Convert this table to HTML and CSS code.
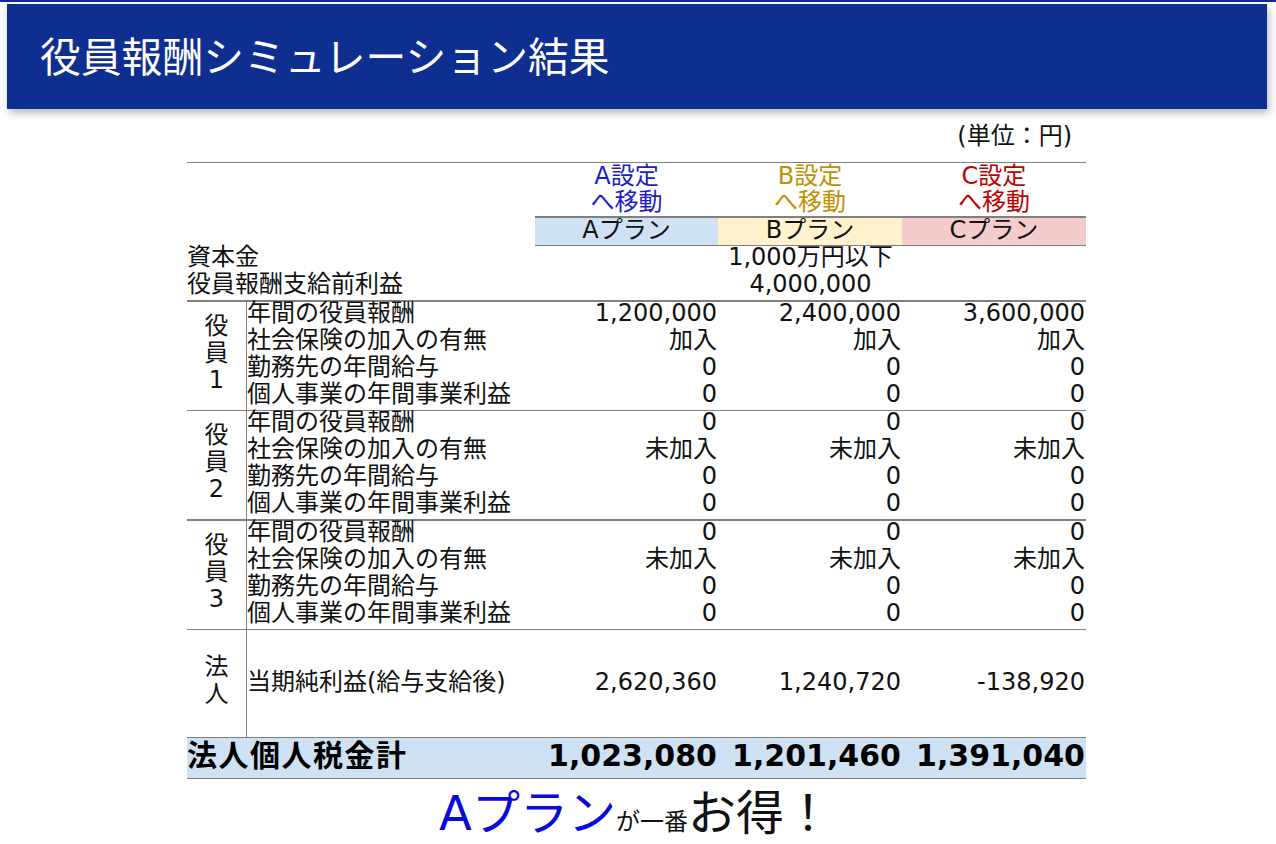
FILE: index.html
```html
<!DOCTYPE html>
<html lang="ja">
<head>
<meta charset="utf-8">
<title>役員報酬シミュレーション結果</title>
<link rel="stylesheet" href="styles.css">
</head>
<body>
<div class="topline"></div>
<header class="banner"><h1>役員報酬シミュレーション結果</h1></header>
<main class="sheet">
  <div class="unit">(単位：円)</div>

  <div class="cols links">
    <div></div>
    <div class="link la">A設定<br>へ移動</div>
    <div class="link lb">B設定<br>へ移動</div>
    <div class="link lc">C設定<br>へ移動</div>
  </div>

  <div class="cols plans">
    <div></div>
    <div class="plan pa">Aプラン</div>
    <div class="plan pb">Bプラン</div>
    <div class="plan pc">Cプラン</div>
  </div>

  <div class="info">
    <div class="irow"><span>資本金</span><span class="mid">1,000万円以下</span></div>
    <div class="irow"><span>役員報酬支給前利益</span><span class="mid">4,000,000</span></div>
  </div>

  <section class="group thick">
    <div class="role">役<br>員<br>1</div>
    <div class="rows">
      <div class="drow"><span>年間の役員報酬</span><span class="num">1,200,000</span><span class="num">2,400,000</span><span class="num">3,600,000</span></div>
      <div class="drow"><span>社会保険の加入の有無</span><span class="num">加入</span><span class="num">加入</span><span class="num">加入</span></div>
      <div class="drow"><span>勤務先の年間給与</span><span class="num">0</span><span class="num">0</span><span class="num">0</span></div>
      <div class="drow"><span>個人事業の年間事業利益</span><span class="num">0</span><span class="num">0</span><span class="num">0</span></div>
    </div>
  </section>

  <section class="group">
    <div class="role">役<br>員<br>2</div>
    <div class="rows">
      <div class="drow"><span>年間の役員報酬</span><span class="num">0</span><span class="num">0</span><span class="num">0</span></div>
      <div class="drow"><span>社会保険の加入の有無</span><span class="num">未加入</span><span class="num">未加入</span><span class="num">未加入</span></div>
      <div class="drow"><span>勤務先の年間給与</span><span class="num">0</span><span class="num">0</span><span class="num">0</span></div>
      <div class="drow"><span>個人事業の年間事業利益</span><span class="num">0</span><span class="num">0</span><span class="num">0</span></div>
    </div>
  </section>

  <section class="group thick">
    <div class="role">役<br>員<br>3</div>
    <div class="rows">
      <div class="drow"><span>年間の役員報酬</span><span class="num">0</span><span class="num">0</span><span class="num">0</span></div>
      <div class="drow"><span>社会保険の加入の有無</span><span class="num">未加入</span><span class="num">未加入</span><span class="num">未加入</span></div>
      <div class="drow"><span>勤務先の年間給与</span><span class="num">0</span><span class="num">0</span><span class="num">0</span></div>
      <div class="drow"><span>個人事業の年間事業利益</span><span class="num">0</span><span class="num">0</span><span class="num">0</span></div>
    </div>
  </section>

  <section class="group corp">
    <div class="role">法<br>人</div>
    <div class="rows">
      <div class="drow crow"><span>当期純利益(給与支給後)</span><span class="num">2,620,360</span><span class="num">1,240,720</span><span class="num">-138,920</span></div>
    </div>
  </section>

  <div class="cols total">
    <span class="tlabel">法人個人税金計</span>
    <span class="num">1,023,080</span>
    <span class="num">1,201,460</span>
    <span class="num">1,391,040</span>
  </div>

  <p class="verdict"><span class="big blue">Aプラン</span><span class="small">が一番</span><span class="big">お得！</span></p>
</main>
</body>
</html>
```

FILE: styles.css
```css
* { box-sizing: border-box; }

body {
  margin: 0;
  background: #ffffff;
  font-family: "DejaVu Sans", "Noto Sans CJK JP", sans-serif;
  color: #111111;
  font-size: 24px;
}

.topline {
  height: 2px;
  background: #0e2f8f;
}

.banner {
  margin: 2px 9px 0 7px;
  height: 105px;
  background: #0e2f8f;
  box-shadow: 2px 4px 8px rgba(0, 0, 0, 0.28);
  display: flex;
  align-items: center;
  padding-left: 33px;
}

.banner h1 {
  margin: 0;
  font-family: "Noto Sans CJK JP", sans-serif;
  font-weight: 400;
  font-size: 40.8px;
  color: #ffffff;
  line-height: 1;
  padding-bottom: 3px;
}

.sheet {
  width: 899px;
  margin-left: 187px;
}

.unit {
  margin-top: 15px;
  height: 27px;
  line-height: 24px;
  text-align: right;
  padding-right: 14px;
  margin-bottom: 11px;
}

.cols {
  display: grid;
  grid-template-columns: 348px 183px 184px 184px;
}

.links {
  border-top: 1px solid #808080;
  height: 54px;
}

.link {
  text-align: center;
  line-height: 26px;
}

.la { color: #1c1ccc; }
.lb { color: #bf9000; }
.lc { color: #c00000; }

.plan {
  text-align: center;
  border-top: 2px solid #808080;
  border-bottom: 1px solid #808080;
  height: 30px;
  line-height: 24px;
  padding-bottom: 3px;
}

.pa { background: #cfe2f3; }
.pb { background: #fff2cc; }
.pc { background: #f4cccc; }

.info {
  height: 54px;
}

.irow {
  display: grid;
  grid-template-columns: 348px 551px;
  height: 27px;
  line-height: 23px;
}

.mid { text-align: center; }

.group {
  display: grid;
  grid-template-columns: 59px 840px;
  border-top: 1px solid #808080;
}

.group.thick { border-top-width: 2px; }

.role {
  display: flex;
  align-items: center;
  justify-content: center;
  text-align: center;
  line-height: 27px;
  padding-bottom: 5px;
}

.rows {
  border-left: 1px solid #808080;
}

.drow {
  display: grid;
  grid-template-columns: 288px 183px 184px 184px;
  height: 27px;
  line-height: 23px;
}

.num {
  text-align: right;
  padding-right: 1px;
  white-space: nowrap;
}

.corp .rows {
  height: 107px;
  display: flex;
  align-items: center;
  padding-top: 2px;
}

.corp .crow {
  width: 839px;
}

.total {
  border-top: 1px solid #808080;
  border-bottom: 1px solid #808080;
  background: #cfe2f3;
  height: 42px;
  font-weight: 700;
  font-size: 30px;
  line-height: 36px;
  padding-bottom: 1px;
  color: #000000;
}

.tlabel {
  white-space: nowrap;
  letter-spacing: 1.5px;
}

.verdict {
  margin: 2px 0 0 0;
  text-align: center;
  padding-right: 2px;
  line-height: 56px;
  color: #111111;
  font-family: "Noto Sans CJK JP", sans-serif;
  font-weight: 400;
}

.big {
  font-size: 48px;
}

.blue {
  color: #0a0ad8;
  font-family: "DejaVu Sans", "Noto Sans CJK JP", sans-serif;
}

.small {
  font-size: 24px;
}
```
